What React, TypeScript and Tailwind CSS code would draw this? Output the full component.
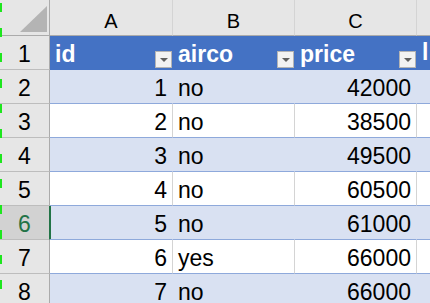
import React from 'react';

interface Row {
    id: number;
    airco: string;
    price: number;
}

const rows: Row[] = [
    { id: 1, airco: 'no', price: 42000 },
    { id: 2, airco: 'no', price: 38500 },
    { id: 3, airco: 'no', price: 49500 },
    { id: 4, airco: 'no', price: 60500 },
    { id: 5, airco: 'no', price: 61000 },
    { id: 6, airco: 'yes', price: 66000 },
    { id: 7, airco: 'no', price: 66000 },
];

const SELECTED_ROW = 6;

const FilterButton: React.FC = () => (
    <span className="mb-[1px] flex h-[17px] w-[17px] shrink-0 items-center justify-center border border-[#b4b4b4] bg-[#f2f2f2]">
        <svg width="8" height="4" viewBox="0 0 8 4">
            <polygon points="0,0 8,0 4,4" fill="#5f5f5f" />
        </svg>
    </span>
);

const ColumnLetter: React.FC<{ label: string; width: string }> = ({ label, width }) => (
    <div className={`${width} flex shrink-0 items-end justify-center border-r border-b border-r-[#d4d4d4] border-b-[#ababab] bg-[#e6e6e6] pb-[4px] text-[20px] leading-[20px]`}>
        {label}
    </div>
);

const HeaderCell: React.FC<{ label: string; width: string }> = ({ label, width }) => (
    <div className={`${width} flex shrink-0 items-end justify-between overflow-hidden border-r border-b border-[#4472c4] bg-[#4472c4] pl-[5px] font-bold text-white`}>
        <span className="whitespace-nowrap pb-[3px]">{label}</span>
        <FilterButton />
    </div>
);

const App: React.FC = () => {
    const cellBase = 'flex shrink-0 items-end border-r border-b border-b-[#8ea9db] pb-[3px] whitespace-nowrap';

    return (
        <div
            className="relative h-[303px] w-[430px] overflow-hidden bg-white text-black"
            style={{ fontFamily: '"Liberation Sans", Arial, sans-serif' }}
        >
            {/* column letters */}
            <div className="flex h-[36px]">
                <div className="flex w-[50px] shrink-0 items-end justify-end border-r border-b border-[#ababab] bg-[#e6e6e6] pr-[2px] pb-[3px]">
                    <svg width="27" height="26" viewBox="0 0 27 26">
                        <polygon points="27,0 27,26 0,26" fill="#b4b4b4" />
                    </svg>
                </div>
                <ColumnLetter label="A" width="w-[123px]" />
                <ColumnLetter label="B" width="w-[122px]" />
                <ColumnLetter label="C" width="w-[122px]" />
                <div className="w-[122px] shrink-0 border-b border-b-[#ababab] bg-[#e6e6e6]" />
            </div>

            <div className="text-[23px] leading-[23px]">
                {/* table header row */}
                <div className="flex h-[34px]">
                    <div className="flex w-[50px] shrink-0 items-end justify-center border-r border-b border-r-[#ababab] border-b-[#bdbdbd] bg-[#e6e6e6] pb-[3px]">
                        1
                    </div>
                    <HeaderCell label="id" width="w-[123px]" />
                    <HeaderCell label="airco" width="w-[122px]" />
                    <HeaderCell label="price" width="w-[122px]" />
                    <div className="w-[122px] shrink-0 overflow-hidden border-b border-[#4472c4] bg-[#4472c4] pl-[5px] pt-[5px] font-bold text-white">
                        l
                    </div>
                </div>

                {rows.map((row, i) => {
                    const n = i + 2;
                    const band = i % 2 === 0;
                    const selected = n === SELECTED_ROW;
                    const fill = band ? 'bg-[#d9e1f2] border-r-[#d9e1f2]' : 'bg-white border-r-[#d4d4d4]';
                    return (
                        <div key={row.id} className="flex h-[34px]">
                            <div
                                className={`flex w-[50px] shrink-0 items-end justify-center border-r border-b border-b-[#bdbdbd] pb-[3px] ${
                                    selected ? 'border-r-[#217346] bg-[#d2d2d2] text-[#217346]' : 'border-r-[#ababab] bg-[#e6e6e6]'
                                }`}
                            >
                                {n}
                            </div>
                            <div className={`${cellBase} ${fill} w-[123px] justify-end pr-[5px] ${selected ? 'shadow-[inset_1px_0_0_#217346]' : ''}`}>
                                {row.id}
                            </div>
                            <div className={`${cellBase} ${fill} w-[122px] pl-[5px]`}>{row.airco}</div>
                            <div className={`${cellBase} ${fill} w-[122px] justify-end pr-[5px]`}>{row.price}</div>
                            <div className={`${cellBase} ${fill} w-[122px]`} />
                        </div>
                    );
                })}
            </div>

            {/* dashed green marker on the left edge */}
            <div className="pointer-events-none absolute top-[3px] bottom-0 left-0 w-[2px] bg-[repeating-linear-gradient(to_bottom,#1ee61e_0px,#1ee61e_9px,transparent_9px,transparent_25.2px)]" />
        </div>
    );
};

export default App;
